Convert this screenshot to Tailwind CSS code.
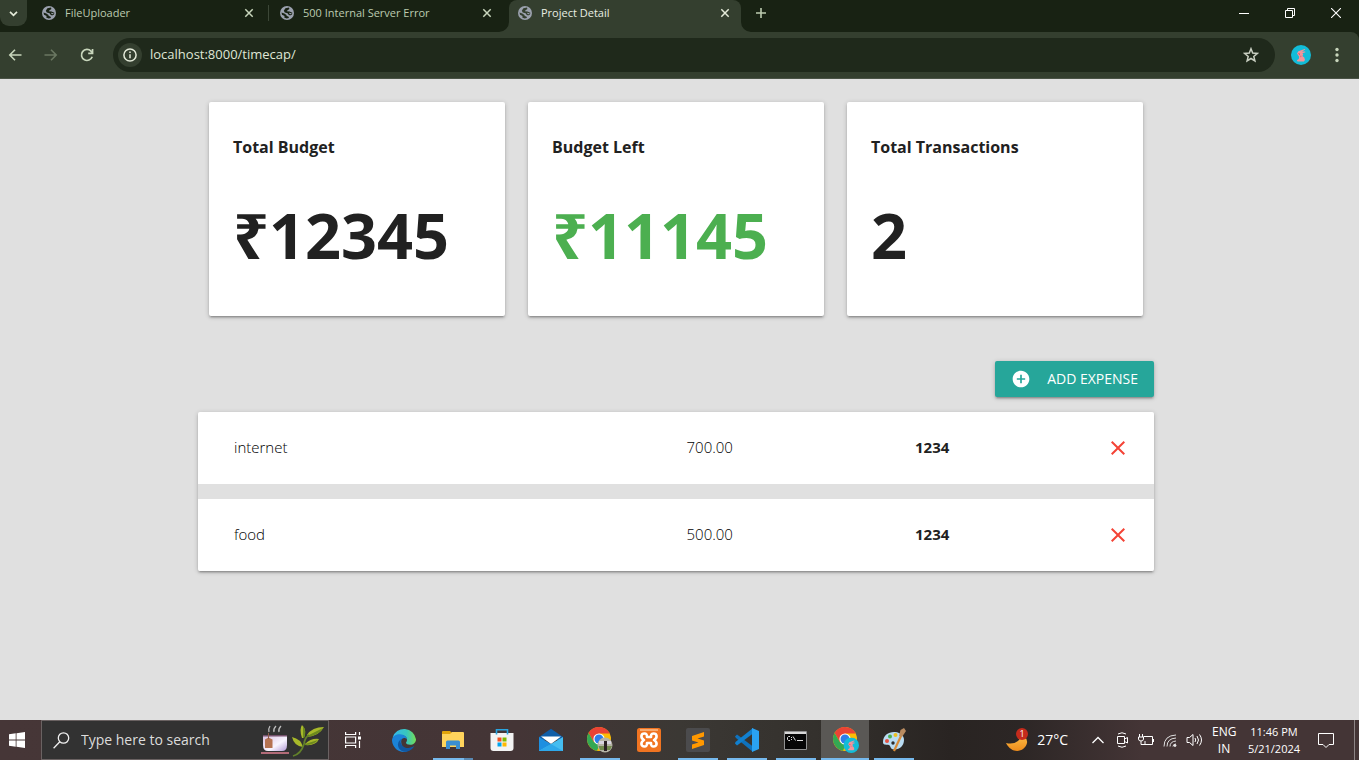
<!DOCTYPE html>
<html lang="en">
<head>
<meta charset="utf-8">
<title>Project Detail</title>
<script src="https://cdn.jsdelivr.net/npm/@tailwindcss/browser@4"></script>
</head>
<body class="flex min-h-screen flex-col bg-[#e0e0e0] font-['Open_Sans','Noto_Sans',sans-serif] text-[#212121]">

<svg class="hidden" aria-hidden="true">
  <symbol id="globe" viewBox="0 0 14 14">
    <circle cx="7" cy="7" r="7" fill="#9ba1ae"/>
    <path fill="currentColor" d="M5.400 2.200 9 1.500 9.400 3 7.600 4.200 6.800 5.300 9.600 5.600 12.400 6.800 12 8.600 10 9.400 8.300 8.600 7.600 7.200 4.800 6.600 3.800 4.800zM1.500 6.500 4.300 7.400 6.500 8.900 6.700 10.100 8.400 10.600 9 12 6.600 12.400 4.200 11.600 4.600 10 2 8.700z"/>
    <path fill="#9ba1ae" d="M9 6.700 11.800 7.200 10.800 8.200 9.600 8z"/>
  </symbol>
  <symbol id="tabx" viewBox="0 0 10 10"><path fill="none" stroke="currentColor" stroke-width="1.5" d="M1.300 1.300l7.400 7.400M8.700 1.300l-7.400 7.400"/></symbol>
  <symbol id="rabbit" viewBox="0 0 20 20">
    <circle cx="10" cy="10" r="10" fill="#12bcd8"/>
    <path fill="#f2949b" d="M7.400 6.200 13.600 4l.8.5-3.400 2L14.200 6.600l.2.700-3 1 .9 1.300-.9 1.500 1.900 1.500.7 2.500-1.100 1.400H6.600l-.8-1.200 2-1.300.4-2.200L6 8.600z"/>
    <path fill="#d94f62" d="M7 8l2.200.8-.8 1.400zM9.600 10.600l1 .3-1.200 1.500z"/>
  </symbol>
  <symbol id="chrome" viewBox="0 0 24 24">
    <circle cx="12" cy="12" r="12" fill="#fbbc05"/>
    <path fill="#ea4335" d="M1.600 6 6.800 15 12 6.600h10.700A12 12 0 0 0 1.600 6z"/>
    <path fill="#34a853" d="M1.600 6l5.200 9 6 2-2.800 6.800A12 12 0 0 1 1.600 6z"/>
    <circle cx="12" cy="12" r="5.600" fill="#fff"/><circle cx="12" cy="12" r="4.500" fill="#2f7de9"/>
  </symbol>
  <symbol id="clear" viewBox="0 0 24 24"><path fill="currentColor" d="M19 6.410 17.590 5 12 10.590 6.410 5 5 6.410 10.590 12 5 17.590 6.410 19 12 13.410 17.590 19 19 17.590 13.410 12z"/></symbol>
</svg>

<header class="bg-[#182213]">
  <div class="flex h-8 items-start">
    <button aria-label="Search tabs" class="mr-[6px] flex h-[26px] w-[27px] items-center justify-center rounded-b-[9px] bg-[#343f2f] text-[#e4ead9]">
      <svg class="size-[9px]" viewBox="0 0 9 9" fill="none" stroke="currentColor" stroke-width="1.7"><path d="M1 2.800l3.500 3.500L8 2.800"/></svg>
    </button>
    <div class="flex h-[26px] w-[238px] items-center text-[11px] text-[#bccbb0]">
      <svg class="mr-[9px] ml-[9px] size-[14px] text-[#182213]"><use href="#globe"/></svg>
      <span class="flex-1">FileUploader</span>
      <button aria-label="Close tab" class="mr-[14px] text-[#c8d6bc]"><svg class="size-[10px]"><use href="#tabx"/></svg></button>
      <span class="mr-[2px] h-4 w-px bg-[#3c4737]"></span>
    </div>
    <div class="flex h-[26px] w-[238px] items-center text-[11px] text-[#bccbb0]">
      <svg class="mr-[9px] ml-[9px] size-[14px] text-[#182213]"><use href="#globe"/></svg>
      <span class="flex-1">500 Internal Server Error</span>
      <button aria-label="Close tab" class="mr-[17px] text-[#c8d6bc]"><svg class="size-[10px]"><use href="#tabx"/></svg></button>
    </div>
    <div class="relative flex h-8 w-[232px] items-center rounded-t-lg bg-[#343f2f] pb-[6px] text-[11px] text-[#e9eee3]">
      <svg class="absolute bottom-0 -left-[10px] size-[10px]" viewBox="0 0 10 10"><path fill="#343f2f" d="M10 0v10H0A10 10 0 0 0 10 0z"/></svg>
      <svg class="absolute -right-[10px] bottom-0 size-[10px]" viewBox="0 0 10 10"><path fill="#343f2f" d="M0 0v10h10A10 10 0 0 1 0 0z"/></svg>
      <svg class="mr-[9px] ml-[9px] size-[14px] text-[#343f2f]"><use href="#globe"/></svg>
      <span class="flex-1">Project Detail</span>
      <button aria-label="Close tab" class="mr-[11px] text-[#e4ead9]"><svg class="size-[10px]"><use href="#tabx"/></svg></button>
    </div>
    <button aria-label="New tab" class="ml-[14px] flex h-[25px] items-center text-[#bccbb0]">
      <svg class="size-3" viewBox="0 0 12 12" stroke="currentColor" stroke-width="1.6"><path d="M6 1v10M1 6h10"/></svg>
    </button>
    <div class="ml-auto flex h-[25px] items-center text-white">
      <button aria-label="Minimize" class="flex w-[46px] justify-center"><svg class="size-[10px]" viewBox="0 0 10 10" stroke="currentColor"><path d="M0 5.500h10"/></svg></button>
      <button aria-label="Restore" class="flex w-[46px] justify-center"><svg class="size-[10px]" viewBox="0 0 10 10" fill="none" stroke="currentColor"><path d="M.5 2.500h7v7h-7zM2.500 2.500v-2h7v7h-2"/></svg></button>
      <button aria-label="Close" class="flex w-[46px] justify-center"><svg class="size-[10px]" viewBox="0 0 10 10" stroke="currentColor" stroke-width="1.1"><path d="M0 0l10 10M10 0L0 10"/></svg></button>
    </div>
  </div>
  <div class="flex h-[47px] items-center rounded-tr-lg border-b border-[#4a5346] bg-[#343f2f] text-[#c8d6bc]">
    <button aria-label="Back" class="flex w-9 justify-end pr-[14px]"><svg class="h-[12px] w-[14px]" viewBox="0 0 14 12" fill="none" stroke="currentColor" stroke-width="1.6"><path d="M13.500 6H2M7 .8 1.800 6 7 11.200"/></svg></button>
    <button aria-label="Forward" class="flex w-9 justify-end pr-[14px] text-[#6a7762]"><svg class="h-[12px] w-[14px]" viewBox="0 0 14 12" fill="none" stroke="currentColor" stroke-width="1.6"><path d="M.5 6H12M7 .8 12.200 6 7 11.200"/></svg></button>
    <button aria-label="Reload" class="flex w-[41px] pl-2"><svg class="size-[14px]" viewBox="0 0 14 14"><path fill="none" stroke="currentColor" stroke-width="1.7" d="M12.200 8.700A5.500 5.500 0 1 1 11 3.200L12.500 4.800"/><path fill="currentColor" d="M13.400 1v5.200H8.200V4.600h3.500V1z"/></svg></button>
    <div class="flex h-[34px] flex-1 items-center rounded-full bg-[#1f291b] pr-4 pl-[5px]">
      <button aria-label="View site information" class="mr-2 flex size-6 items-center justify-center rounded-full bg-[#343f2f] text-[#e4ead9]"><svg class="size-[14px]" viewBox="0 0 14 14"><circle cx="7" cy="7" r="6.100" fill="none" stroke="currentColor" stroke-width="1.500"/><path stroke="currentColor" stroke-width="1.500" d="M7 6.200v4M7 3.600v1.500"/></svg></button>
      <input aria-label="Address" class="min-w-0 flex-1 bg-transparent text-[13px] text-[#dfe6d6] outline-none" value="localhost:8000/timecap/">
      <button aria-label="Bookmark this tab" class="text-[#c9cfc2]"><svg class="size-4" viewBox="0 0 16 16" fill="none" stroke="currentColor" stroke-width="1.500"><path d="M8 1.700 9.700 6l4.600.4-3.500 3 1.100 4.500L8 11.500l-3.900 2.400 1.100-4.500-3.500-3L6.300 6z"/></svg></button>
    </div>
    <button aria-label="Profile" class="ml-4"><svg class="size-5"><use href="#rabbit"/></svg></button>
    <button aria-label="Menu" class="mr-5 ml-6"><svg class="h-4 w-1" viewBox="0 0 4 16" fill="currentColor"><circle cx="2" cy="2.500" r="1.700"/><circle cx="2" cy="8" r="1.700"/><circle cx="2" cy="13.500" r="1.700"/></svg></button>
  </div>
</header>

<main class="flex-1 pt-[23px] pr-[7px]">
  <div class="mx-auto w-full max-w-[956px]">
    <section class="grid grid-cols-3 gap-[23px] px-[11px]">
      <div class="rounded-xs bg-white px-6 pt-8 pb-[46px] shadow-[0_2px_2px_rgba(0,0,0,0.14),0_3px_1px_-2px_rgba(0,0,0,0.12),0_1px_5px_rgba(0,0,0,0.2)]">
        <h2 class="text-base leading-[26px] font-bold">Total Budget</h2>
        <p class="mt-10 text-[63px] leading-[70px] font-bold">₹12345</p>
      </div>
      <div class="rounded-xs bg-white px-6 pt-8 pb-[46px] shadow-[0_2px_2px_rgba(0,0,0,0.14),0_3px_1px_-2px_rgba(0,0,0,0.12),0_1px_5px_rgba(0,0,0,0.2)]">
        <h2 class="text-base leading-[26px] font-bold">Budget Left</h2>
        <p class="mt-10 text-[63px] leading-[70px] font-bold text-[#4caf50]">₹11145</p>
      </div>
      <div class="rounded-xs bg-white px-6 pt-8 pb-[46px] shadow-[0_2px_2px_rgba(0,0,0,0.14),0_3px_1px_-2px_rgba(0,0,0,0.12),0_1px_5px_rgba(0,0,0,0.2)]">
        <h2 class="text-base leading-[26px] font-bold">Total Transactions</h2>
        <p class="mt-10 text-[63px] leading-[70px] font-bold">2</p>
      </div>
    </section>

    <div class="mt-[45px] flex justify-end">
      <button class="flex h-9 items-center rounded-xs bg-[#26a69a] px-4 text-sm text-white shadow-[0_2px_2px_rgba(0,0,0,0.14),0_3px_1px_-2px_rgba(0,0,0,0.12),0_1px_5px_rgba(0,0,0,0.2)]">
        <svg class="mr-4 size-5" viewBox="0 0 24 24" fill="currentColor"><path d="M12 2C6.480 2 2 6.480 2 12s4.480 10 10 10 10-4.480 10-10S17.520 2 12 2zm5 11h-4v4h-2v-4H7v-2h4V7h2v4h4v2z"/></svg>
        ADD EXPENSE
      </button>
    </div>

    <table class="mt-[15px] w-full table-fixed border-separate border-spacing-0 rounded-xs text-left text-[15px] shadow-[0_2px_2px_rgba(0,0,0,0.14),0_3px_1px_-2px_rgba(0,0,0,0.12),0_1px_5px_rgba(0,0,0,0.2)]">
      <tbody>
        <tr class="h-[87px] bg-white">
          <td class="w-[51%] rounded-tl-xs border-b-[15px] border-[#e0e0e0] pb-0.5 pl-9 font-light text-black">internet</td>
          <td class="w-[24%] border-b-[15px] border-[#e0e0e0] pb-0.5 pl-px font-light text-black">700.00</td>
          <td class="border-b-[15px] border-[#e0e0e0] pb-0.5 font-bold">1234</td>
          <td class="rounded-tr-xs border-b-[15px] border-[#e0e0e0] pr-6 text-right"><button aria-label="Delete internet" class="align-middle text-[#f44336]"><svg class="size-6"><use href="#clear"/></svg></button></td>
        </tr>
        <tr class="h-[72px] bg-white">
          <td class="rounded-bl-xs pb-0.5 pl-9 font-light text-black">food</td>
          <td class="pb-0.5 pl-px font-light text-black">500.00</td>
          <td class="pb-0.5 font-bold">1234</td>
          <td class="rounded-br-xs pr-6 text-right"><button aria-label="Delete food" class="align-middle text-[#f44336]"><svg class="size-6"><use href="#clear"/></svg></button></td>
        </tr>
      </tbody>
    </table>
  </div>
</main>

<footer class="flex h-10 items-stretch bg-[linear-gradient(to_right,#463637_0%,#443536_38%,#3b3834_50%,#34312d_60%,#292422_70%,#2c2625_75%,#443536_84%,#443536_100%)] text-white">
  <button aria-label="Start" class="flex w-[41px] items-center pl-[9px]"><svg class="size-4" viewBox="0 0 16 16" fill="#fff"><path d="M0 2.300 6.700 1.300v6.300H0zM7.500 1.200 16 0v7.600H7.500zM0 8.400h6.700v6.300L0 13.700zM7.500 8.400H16V16l-8.500-1.200z"/></svg></button>
  <label class="mr-px flex w-72 items-center border border-[#6a6262] bg-[#323232] pl-[11px]">
    <svg class="mr-[11px] size-[17px]" viewBox="0 0 17 17" fill="none" stroke="#f0f0f0" stroke-width="1.300"><circle cx="10.500" cy="6" r="5.200"/><path d="M6.800 9.800.6 16.200"/></svg>
    <input aria-label="Search" class="w-0 flex-1 bg-transparent text-sm outline-none placeholder:text-[#dcdcdc]" placeholder="Type here to search">
    <svg class="mr-1 h-9 w-16" viewBox="0 0 64 36">
      <defs><linearGradient id="cup" x2="1" y2="1"><stop stop-color="#d9bfe0"/><stop offset=".6" stop-color="#f8f4ff"/><stop offset="1" stop-color="#b39ad6"/></linearGradient></defs>
      <g fill="none" stroke="#bdbdbd" stroke-width="1.300"><path d="M9 10q-1-3 1-6M14 10q-1-3 2-6M19 10q-1-3 2-6"/></g>
      <path fill="url(#cup)" d="M3 13h24v10q0 6-5 6H8q-5 0-5-6z"/><path fill="#75516c" d="M3 13h24v1.500H3z"/>
      <path fill="#b57252" d="M5 17.500l3.500-2 4 2V26H5z"/><path stroke="#8a5b48" d="M8.500 11v6"/>
      <path fill="#b26b78" d="M1 30h28v2H1z"/>
      <g fill="#a8b92a"><path d="M42 16q-3-9 0-13 5 5 2 13zM43 25q-9-1-11-10 9 2 11 10zM47 13q5-8 17-8-5 9-17 10zM45 22q6-6 14-5-3 7-14 6z"/></g>
      <g fill="#6d8a1e"><path d="M43 16V4q4 5 1 12zM47 14 63 6q-5 8-16 9zM45 22l13-4q-4 5-13 5z"/></g>
      <path fill="none" stroke="#62802a" stroke-width="1.800" d="M33 34q8-2 11-12 1-7 5-9"/>
    </svg>
  </label>
  <div class="flex items-stretch">
    <button aria-label="Task View" class="flex w-[49px] items-center justify-center pr-1"><svg class="size-4" viewBox="0 0 16 16" fill="none" stroke="#fff" stroke-width="1.200"><path d="M.6 0v2.500h10V0M.6 5h10v6H.6zM.6 16v-2.500h10V16M14.500 0v3M14.500 9v7"/><path fill="#fff" stroke="none" d="M13 4.500h3v3h-3z"/></svg></button>
    <button aria-label="Edge" class="flex w-[49px] items-center justify-center"><svg class="size-6" viewBox="0 0 24 24">
      <defs><linearGradient id="e1" x2="1"><stop stop-color="#35b7ec"/><stop offset=".6" stop-color="#38c6bd"/><stop offset="1" stop-color="#74de55"/></linearGradient></defs>
      <path fill="url(#e1)" d="M.6 9.500A12 12 0 0 1 24 11.300c0 3.500-2.600 5.500-5.800 5.500-2.600 0-4.200-1-4.200-2 0-.8 1-1 1-3C15 8 11 6.500 8 7 4.500 7.300 2 8.500.6 9.500z"/>
      <path fill="#1b83d8" d="M0 12.500C0 8.500 4 6 8 6.300c4 .2 7 2.700 7 5.200-1-1.500-3.500-2-5-.5-2 2-.5 9 5 12.600A12 12 0 0 1 0 12.500z"/>
      <path fill="#1157a1" d="M8.500 13c0 4 4 7.500 8 7 3-.3 4.500-1.300 6-2.200A12 12 0 0 1 15 23.700C9 24.500 5.500 19.500 6 16c.3-3 2.500-5 4.500-5.300-1 .5-2 1.300-2 2.300z"/></svg></button>
    <button aria-label="File Explorer" class="relative flex w-[49px] items-center justify-center"><svg class="h-[18px] w-[22px]" viewBox="0 0 22 18"><path fill="#e2a50b" d="M0 1q0-1 1-1h7l2 2v3H0z"/><path fill="#ffd45c" d="M0 3h8l2-2h11q1 0 1 1v14H0z"/><path fill="#3b8fd1" d="M4 18v-7q0-1.500 1.500-1.500h11q1.500 0 1.500 1.500v7h-4v-3.500H8V18z"/></svg><span class="absolute bottom-0 flex h-[2px] w-10 bg-[#76b9ed]"><span class="ml-auto w-[9px] bg-[#5989b3]"></span></span></button>
    <button aria-label="Store" class="flex w-[49px] items-center justify-center"><svg class="h-6 w-6" viewBox="0 0 24 24"><path fill="#f3f3f3" d="M.5 5h23v15q0 3-3 3h-17q-3 0-3-3z"/><path fill="none" stroke="#2aa5e0" stroke-width="1.600" d="M6.500 6.500V1.800h11v4.700"/><path fill="#f25022" d="M7.500 9.500h4v4h-4z"/><path fill="#7fba00" d="M12.500 9.500h4v4h-4z"/><path fill="#00a4ef" d="M7.500 14.500h4v4h-4z"/><path fill="#ffb900" d="M12.500 14.500h4v4h-4z"/></svg></button>
    <button aria-label="Mail" class="flex w-[49px] items-center justify-center"><svg class="h-6 w-6" viewBox="0 0 24 24"><path fill="#0f5ea8" d="M0 9 12 .8 24 9v3H0z"/><path fill="#fff" d="M2 8.500h20L12 16z"/><path fill="#1d8fe0" d="M0 9l12 7-10 7H0z"/><path fill="#45bdf0" d="M24 9 0 23h24z"/><path fill="#2ea8ea" d="M12 16l12 7H0z"/></svg></button>
    <button aria-label="Chrome" class="relative flex w-[49px] items-center justify-center"><svg class="size-[26px]" viewBox="0 0 26 26"><use href="#chrome" width="24" height="24"/><circle cx="18" cy="18" r="7.500" fill="#b4b3a4"/><path fill="#728b4e" d="M11.500 19h13.500l-2 4H13z"/><path fill="#d8d4df" d="M12 14h12v3H12z"/><path fill="#2b2024" d="M17 14h3v10h-3z"/></svg><span class="absolute bottom-0 h-[2px] w-10 bg-[#76b9ed]"></span></button>
    <button aria-label="XAMPP" class="flex w-[49px] items-center justify-center"><svg class="size-6" viewBox="0 0 24 24"><rect width="24" height="24" rx="2.500" fill="#f17421"/><path fill="#f8ab71" d="M3 1h18v2H3z"/><path fill="none" stroke="#fff" stroke-width="2.600" stroke-linejoin="round" d="M7 12C3 9.500 4 5.500 7.500 5.500c2.500 0 2.500 1.500 2.500 3.500h4c0-2 0-3.500 2.500-3.500 3.500 0 4.500 4 .5 6.500 4 2.500 3 6.500-.5 6.500-2.500 0-2.500-1.500-2.500-3.500h-4c0 2 0 3.500-2.500 3.500C4 18.500 3 14.500 7 12z"/></svg></button>
    <button aria-label="Sublime Text" class="relative flex w-[49px] items-center justify-center"><svg class="size-6" viewBox="0 0 24 24"><rect width="24" height="24" rx="2" fill="#4b4b4d"/><path fill="#ff9800" d="M18 4v4.500l-6.500 2 6.500 2V17L6 21v-4.500l6.500-2-6.500-2V8z"/></svg><span class="absolute bottom-0 h-[2px] w-10 bg-[#76b9ed]"></span></button>
    <button aria-label="Visual Studio Code" class="relative flex w-[49px] items-center justify-center"><svg class="size-6" viewBox="0 0 24 24"><path fill="#0f72bd" d="M0 8.500 2 6.500l16 12V24L1 10z"/><path fill="#1180cf" d="M0 15.500 2 17.500l16-12V0L.5 14z"/><path fill="#2aa2f2" d="M17 0l7 3v18l-7 3z"/></svg><span class="absolute bottom-0 h-[2px] w-10 bg-[#76b9ed]"></span></button>
    <button aria-label="Command Prompt" class="relative flex w-[49px] items-center justify-center"><svg class="h-[19px] w-[23px]" viewBox="0 0 23 19"><path fill="#060606" stroke="#929292" d="M.5.5h22v18H.5z"/><path fill="#d8d8d8" d="M1 1h21v2H1z"/><path fill="none" stroke="#ddd" d="M6 5.500H4.500L3.500 6.500v2l1 1H6M7.500 6v1M7.500 8v1M9 5.500l2.500 4M13 9.500h6"/></svg><span class="absolute bottom-0 h-[2px] w-10 bg-[#76b9ed]"></span></button>
    <button aria-label="Chrome, Project Detail" class="relative ml-px flex w-12 items-center justify-center border-b-2 border-[#76b9ed] bg-[#5a5855]"><svg class="mt-[2px] ml-[2px] size-[26px]" viewBox="0 0 26 26"><use href="#chrome" width="24" height="24"/><use href="#rabbit" x="10.500" y="10.500" width="15.500" height="15.500"/></svg></button>
    <button aria-label="Paint" class="relative flex w-[49px] items-center justify-center"><svg class="size-6" viewBox="0 0 24 24"><path fill="#b9dcf3" d="M1 14C1 7 7 3.500 13 4s9 4 9 8c0 6-5 10-10 9.500-4 0-3-3.500-5-4.500S1 18 1 14z"/><circle cx="5" cy="13" r="2" fill="#e35141"/><circle cx="8" cy="8.500" r="2" fill="#4ab052"/><circle cx="13.500" cy="7" r="2" fill="#edbf21"/><circle cx="11" cy="15" r="1.700" fill="#2e2c2c"/><path stroke="#d88b38" stroke-width="2.200" d="M12 23 19 8"/><path fill="#b98b60" d="M17 8l1.500-6L22 0l2 3-4 6z"/></svg><span class="absolute bottom-0 h-[2px] w-10 bg-[#76b9ed]"></span></button>
  </div>
  <div class="ml-auto flex items-center">
    <button class="mr-6 flex items-center gap-2 text-sm"><svg class="size-6" viewBox="0 0 24 24"><defs><linearGradient id="moon" x2="0" y2="1"><stop stop-color="#ffc14a"/><stop offset="1" stop-color="#ee8c1b"/></linearGradient></defs><path fill="url(#moon)" d="M1 15q8 2 13-3 2-3 1-6 8 3 7 9c-2 9-15 12-21 0z"/><circle cx="17" cy="6" r="6" fill="#c42b1c"/><text x="17" y="9" text-anchor="middle" font-size="9" fill="#fff">1</text></svg>27°C</button>
    <button aria-label="Show hidden icons" class="mr-[10px]"><svg class="h-2 w-3" viewBox="0 0 12 8" fill="none" stroke="#fff" stroke-width="1.300"><path d="M.5 7 6 1.500 11.500 7"/></svg></button>
    <svg class="mr-2 size-4" viewBox="0 0 16 16" fill="none" stroke="#fff"><path d="M3.500 4.500h7v7h-7zM10.500 7l3-1.500v5.500l-3-1.500M4 2q4-2.500 8 0M4 14q4 2.500 8 0"/></svg>
    <svg class="mr-2 size-4" viewBox="0 0 16 16" fill="none" stroke="#fff"><path d="M5.500 4.500h9v8h-7.500V9M15.500 7v3M1.500 2v3M4.500 2v3M.5 5h5v2q0 2-2.500 2T.5 7zM3 9v3.500h4"/></svg>
    <svg class="mr-2 size-4" viewBox="0 0 16 16" fill="none" stroke="#e0e0e0"><path d="M2 14.500Q2 3.500 14 3M5 14.500Q5 6.500 14 6M8 14.500Q8 9.500 14 9M11 14.500q0-2.500 3-2.500"/><circle cx="13" cy="13.500" r="1" fill="#fff"/></svg>
    <svg class="mr-2 h-4 w-[18px]" viewBox="0 0 18 16" fill="none" stroke="#fff"><path d="M1 5.500h2.500L7 2.500v11l-3.500-3H1zM9 6q1.500 2 0 4M11 4q3 4 0 8M13.500 2.500q4 5.500 0 11"/></svg>
    <div class="w-6 text-center text-xs leading-[17px]">ENG<br>IN</div>
    <div class="ml-2 w-[60px] text-center text-[11px] leading-[17px]">11:46 PM<br>5/21/2024</div>
    <button aria-label="Notifications" class="mr-5 ml-[14px]"><svg class="h-[17px] w-4" viewBox="0 0 16 17" fill="none" stroke="#fff"><path d="M.5 1.500h15v11H11L8 15.500 5 12.500H.5z"/></svg></button>
    <span class="mr-1 h-10 w-px bg-[#8d8586]"></span>
  </div>
</footer>
</body>
</html>
